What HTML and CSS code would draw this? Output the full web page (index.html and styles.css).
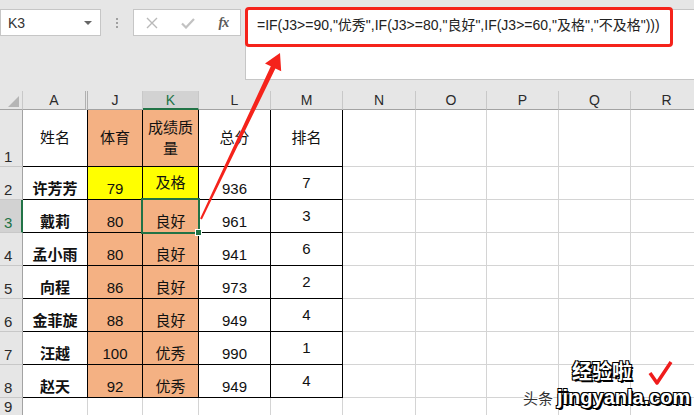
FILE: index.html
```html
<!DOCTYPE html>
<html lang="zh-CN">
<head>
<meta charset="utf-8">
<title>Excel</title>
<link rel="stylesheet" href="styles.css">
</head>
<body>
<div class="top">
  <div class="namebox"><span>K3</span><span class="caret"></span></div>
  <div class="dots"><i></i><i></i><i></i></div>
  <div class="fxbox">
    <svg class="ico" width="12" height="12" viewBox="0 0 12 12"><path d="M1 1L11 11M11 1L1 11" stroke="#b9b9b9" stroke-width="1.4" fill="none"/></svg>
    <svg class="ico" width="14" height="12" viewBox="0 0 14 12"><path d="M1 6.5L5 10.5L13 2" stroke="#c2c2c2" stroke-width="2.2" fill="none"/></svg>
    <span class="fx">fx</span>
  </div>
  <div class="formula">=IF(J3&gt;=90,"优秀",IF(J3&gt;=80,"良好",IF(J3&gt;=60,"及格","不及格")))</div>
</div>

<div class="sheet">
  <div class="h corner"><span class="tri"></span></div><div class="h dbl">A</div><div class="h">J</div><div class="h sel">K</div><div class="h">L</div><div class="h">M</div><div class="h">N</div><div class="h">O</div><div class="h">P</div><div class="h">Q</div><div class="h">R</div>

  <div class="rh">1</div>
  <div class="c t m">姓名</div><div class="c t m or">体育</div><div class="c t m or wrap">成绩质量</div><div class="c t m">总分</div><div class="c t m">排名</div>
  <div class="c"></div><div class="c"></div><div class="c"></div><div class="c"></div><div class="c"></div>

  <div class="rh">2</div>
  <div class="c t b bold">许芳芳</div><div class="c t b ye">79</div><div class="c t m ye">及格</div><div class="c t b">936</div><div class="c t m">7</div>
  <div class="c"></div><div class="c"></div><div class="c"></div><div class="c"></div><div class="c"></div>

  <div class="rh rsel">3</div>
  <div class="c t b bold">戴莉</div><div class="c t b or">80</div><div class="c t b or active">良好</div><div class="c t b">961</div><div class="c t m">3</div>
  <div class="c"></div><div class="c"></div><div class="c"></div><div class="c"></div><div class="c"></div>

  <div class="rh">4</div>
  <div class="c t b bold">孟小雨</div><div class="c t b or">80</div><div class="c t b or">良好</div><div class="c t b">941</div><div class="c t m">6</div>
  <div class="c"></div><div class="c"></div><div class="c"></div><div class="c"></div><div class="c"></div>

  <div class="rh">5</div>
  <div class="c t b bold">向程</div><div class="c t b or">86</div><div class="c t b or">良好</div><div class="c t b">973</div><div class="c t m">2</div>
  <div class="c"></div><div class="c"></div><div class="c"></div><div class="c"></div><div class="c"></div>

  <div class="rh">6</div>
  <div class="c t b bold">金菲旋</div><div class="c t b or">88</div><div class="c t b or">良好</div><div class="c t b">949</div><div class="c t m">4</div>
  <div class="c"></div><div class="c"></div><div class="c"></div><div class="c"></div><div class="c"></div>

  <div class="rh">7</div>
  <div class="c t b bold">汪越</div><div class="c t b or">100</div><div class="c t b or">优秀</div><div class="c t b">990</div><div class="c t m">1</div>
  <div class="c"></div><div class="c"></div><div class="c"></div><div class="c"></div><div class="c"></div>

  <div class="rh">8</div>
  <div class="c t b bold">赵天</div><div class="c t b or">92</div><div class="c t b or">优秀</div><div class="c t b">949</div><div class="c t m">4</div>
  <div class="c"></div><div class="c"></div><div class="c"></div><div class="c"></div><div class="c"></div>

  <div class="rh r9">9</div>
  <div class="c"></div><div class="c"></div><div class="c"></div><div class="c"></div><div class="c"></div>
  <div class="c"></div><div class="c"></div><div class="c"></div><div class="c"></div><div class="c"></div>
</div>

<div class="redbox"></div>
<svg class="arrow" width="694" height="415" viewBox="0 0 694 415">
  <polygon points="200.1,218.6 270.8,66.3 265,63.5 280,53 281.2,71.3 275.4,68.5 201.9,219.4" fill="#f5231b"/>
</svg>

<div class="wm">
  <span class="wm-t1">经验啦</span>
  <svg class="wm-ck" width="26" height="26" viewBox="0 0 26 26"><path d="M3 13L10 23L24 2" stroke="#ef1c1c" stroke-width="3.5" fill="none" stroke-linejoin="round"/></svg>
  <span class="wm-t2">头条</span>
  <span class="wm-t3">jingyanla.com</span>
</div>
</body>
</html>
```

FILE: styles.css
```css
body {
  margin: 0;
  width: 694px;
  height: 415px;
  overflow: hidden;
  position: relative;
  background: #e6e6e6;
  font-family: "Liberation Sans", "Noto Sans CJK SC", sans-serif;
  color: #1e1e1e;
}

.top {
  height: 91px;
  box-sizing: border-box;
  padding-top: 9px;
  display: flex;
  align-items: flex-start;
}

.namebox {
  width: 101px;
  height: 27px;
  box-sizing: border-box;
  background: #fff;
  border: 1px solid #c6c6c6;
  display: flex;
  align-items: center;
  justify-content: space-between;
  padding: 0 8px 0 7px;
  font-size: 14px;
  color: #333;
}

.caret {
  width: 0;
  height: 0;
  border-left: 4px solid transparent;
  border-right: 4px solid transparent;
  border-top: 4px solid #666;
}

.dots {
  width: 32px;
  height: 27px;
  display: flex;
  flex-direction: column;
  align-items: center;
  justify-content: center;
  gap: 2px;
}

.dots i {
  width: 2px;
  height: 2px;
  background: #a0a0a0;
}

.fxbox {
  width: 108px;
  height: 27px;
  box-sizing: border-box;
  background: #fff;
  border: 1px solid #c6c6c6;
  display: flex;
  align-items: center;
  justify-content: space-around;
}

.fx {
  font-family: "Liberation Serif", serif;
  font-style: italic;
  font-weight: bold;
  font-size: 14px;
  color: #5a5a5a;
  letter-spacing: -1px;
}

.formula {
  flex: 1;
  margin-left: 4px;
  height: 71px;
  box-sizing: border-box;
  background: #fff;
  border: 1px solid #c6c6c6;
  border-right: 0;
  padding: 5px 0 0 11px;
  font-size: 14px;
  line-height: 20px;
  color: #222;
  white-space: nowrap;
}

.sheet {
  display: grid;
  grid-template-columns: 23px 65px 55px 56px 72px 72px 73px 71px 72px 72px 72px;
  grid-template-rows: 19px 57px repeat(7, 33px) 20px;
  background: #fff;
}

.h {
  background: #e6e6e6;
  border-right: 1px solid #c8c8c8;
  border-bottom: 1px solid #a3a3a3;
  display: flex;
  align-items: center;
  justify-content: center;
  font-size: 14px;
  color: #2b2b2b;
}

.corner {
  align-items: flex-end;
  justify-content: flex-end;
  padding: 0 3px 2px 0;
}

.tri {
  width: 0;
  height: 0;
  border-left: 11px solid transparent;
  border-bottom: 11px solid #b5b5b5;
}

.dbl {
  border-right: 3px double #b0b0b0;
}

.h.sel {
  background: #d2d2d2;
  border-bottom: 2px solid #217346;
  color: #217346;
}

.rh {
  background: #e6e6e6;
  border-right: 1px solid #a3a3a3;
  border-bottom: 1px solid #c8c8c8;
  display: flex;
  align-items: flex-end;
  padding: 0 0 1px 4px;
  font-size: 15px;
  color: #2b2b2b;
}

.rh.r9 {
  align-items: flex-start;
  padding-top: 0;
  line-height: 17px;
}

.rh.rsel {
  background: #d2d2d2;
  border-right: 2px solid #217346;
  color: #217346;
}

.c {
  border-right: 1px solid #d4d4d4;
  border-bottom: 1px solid #d4d4d4;
  display: flex;
  justify-content: center;
  text-align: center;
  font-size: 15px;
  line-height: 18px;
  color: #111;
}

.c.t {
  border-right-color: #000;
  border-bottom-color: #000;
}

.m {
  align-items: center;
}

.b {
  align-items: flex-end;
  padding-bottom: 1px;
}

.bold {
  font-weight: bold;
}

.or {
  background: #f4b183;
}

.ye {
  background: #ffff00;
}

.wrap {
  padding: 0 3px;
  line-height: 21px;
}

.active {
  position: relative;
}

.active::after {
  content: "";
  position: absolute;
  left: -2px;
  top: -2px;
  right: -2px;
  bottom: -2px;
  border: 2px solid #217346;
}

.active::before {
  content: "";
  position: absolute;
  right: -4px;
  bottom: -4px;
  width: 5px;
  height: 5px;
  background: #217346;
  border: 1px solid #fff;
  z-index: 2;
}

.redbox {
  position: absolute;
  left: 245px;
  top: 7px;
  width: 428px;
  height: 40px;
  box-sizing: border-box;
  border: 3px solid #f5231b;
  border-radius: 4px;
}

.arrow {
  position: absolute;
  left: 0;
  top: 0;
  pointer-events: none;
}

.wm {
  position: absolute;
  left: 520px;
  top: 358px;
  width: 174px;
  height: 57px;
}

.wm-t1,
.wm-t2,
.wm-t3 {
  position: absolute;
  white-space: nowrap;
}

.wm-t1 {
  left: 52px;
  top: 2px;
  font-family: "Noto Sans CJK SC", sans-serif;
  font-weight: bold;
  font-size: 20px;
  line-height: 22px;
  color: #fff;
  text-shadow: 1px 1px 0 #000, -1px -1px 0 #000, 1px -1px 0 #000, -1px 1px 0 #000, 2px 2px 0 #000;
}

.wm-ck {
  position: absolute;
  left: 127px;
  top: 2px;
}

.wm-t2 {
  left: 3px;
  top: 31px;
  font-family: "Noto Sans CJK SC", sans-serif;
  font-size: 15px;
  line-height: 18px;
  color: #333;
  text-shadow: 1px 1px 0 #fff, -1px -1px 0 #fff, 1px -1px 0 #fff, -1px 1px 0 #fff;
}

.wm-t3 {
  left: 37px;
  top: 28px;
  font-family: "Liberation Sans", sans-serif;
  font-weight: bold;
  font-size: 20px;
  line-height: 22px;
  color: #fff;
  text-shadow: 1px 1px 0 #000, -1px -1px 0 #000, 1px -1px 0 #000, -1px 1px 0 #000, 2px 2px 0 #000;
}
```
